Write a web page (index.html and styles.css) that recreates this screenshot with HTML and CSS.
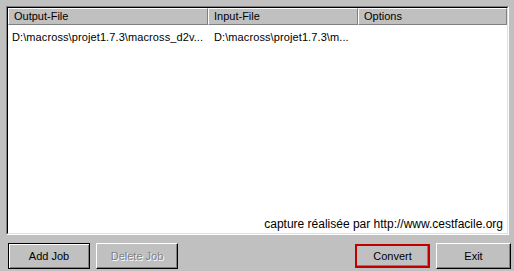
FILE: index.html
```html
<!DOCTYPE html>
<html>
<head>
<meta charset="utf-8">
<link rel="stylesheet" href="styles.css">
</head>
<body>
<div class="app">
  <div class="list-outer">
    <div class="list-inner">
      <div class="header">
        <div class="hcell c1">Output-File</div>
        <div class="hcell c2">Input-File</div>
        <div class="hcell c3">Options</div>
      </div>
      <div class="body">
        <div class="row">
          <div class="cell c1">D:\macross\projet1.7.3\macross_d2v...</div>
          <div class="cell c2">D:\macross\projet1.7.3\m...</div>
          <div class="cell c3"></div>
        </div>
        <div class="caption">capture réalisée par http://www.cestfacile.org</div>
      </div>
    </div>
  </div>
  <div class="buttons">
    <div class="group">
      <button class="btn default">Add Job</button>
      <button class="btn disabled">Delete Job</button>
    </div>
    <div class="group">
      <button class="btn highlight">Convert</button>
      <button class="btn">Exit</button>
    </div>
  </div>
</div>
</body>
</html>
```
FILE: styles.css
```css
html, body {
  margin: 0;
  padding: 0;
  background: #c0c0c0;
  font-family: "Liberation Sans", Arial, sans-serif;
  font-size: 11px;
  color: #000;
}
.app {
  width: 514px;
  height: 271px;
  display: flex;
  flex-direction: column;
  box-sizing: border-box;
  padding: 6px 3px 0 6px;
}
.list-outer {
  width: 503px;
  height: 229px;
  box-sizing: border-box;
  border-top: 1px solid #808080;
  border-left: 1px solid #808080;
  border-right: 1px solid #fff;
  border-bottom: 1px solid #fff;
}
.list-inner {
  height: 100%;
  box-sizing: border-box;
  border-top: 1px solid #000;
  border-left: 1px solid #000;
  border-right: 1px solid #dfdfdf;
  border-bottom: 1px solid #dfdfdf;
  background: #fff;
  display: flex;
  flex-direction: column;
}
.header {
  display: flex;
  height: 17px;
  background: #c0c0c0;
}
.hcell {
  box-sizing: border-box;
  height: 17px;
  border-top: 1px solid #fff;
  border-left: 1px solid #fff;
  border-right: 1px solid #808080;
  border-bottom: 1px solid #808080;
  padding-left: 5px;
  line-height: 15px;
  white-space: nowrap;
  overflow: hidden;
}
.c1 { width: 200px; }
.c2 { width: 150px; }
.c3 { width: 149px; }
.body {
  flex: 1;
  display: flex;
  flex-direction: column;
}
.row {
  display: flex;
  padding-top: 5px;
}
.cell {
  box-sizing: border-box;
  padding-left: 4px;
  line-height: 14px;
  white-space: nowrap;
  overflow: hidden;
  letter-spacing: 0.1px;
}
.row .c2 { padding-left: 6px; }
.caption {
  margin-top: auto;
  text-align: right;
  padding-right: 4px;
  padding-bottom: 1px;
  font-size: 12px;
  line-height: 15px;
}
.buttons {
  display: flex;
  justify-content: space-between;
  margin-top: 8px;
  padding-left: 2px;
}
.group {
  display: flex;
  gap: 6px;
  align-items: flex-start;
}
.btn {
  font-family: "Liberation Sans", Arial, sans-serif;
  font-size: 11px;
  color: #000;
  background: #c0c0c0;
  box-sizing: border-box;
  height: 26px;
  padding: 0;
  margin: 0;
  width: 75px;
  border-top: 1px solid #fff;
  border-left: 1px solid #fff;
  border-right: 1px solid #000;
  border-bottom: 1px solid #000;
  box-shadow: inset -1px -1px 0 #808080;
}
.btn.default {
  width: 82px;
  border: 1px solid #000;
  box-shadow: inset 1px 1px 0 #fff, inset -1px -1px 0 #808080;
}
.btn.disabled {
  width: 82px;
  color: #808080;
  text-shadow: 1px 1px 0 #fff;
}
.btn.highlight {
  height: 24px;
  margin-top: 1px;
  border: 2px solid #c00000;
  box-shadow: inset -1px -1px 0 #808080;
}
```
